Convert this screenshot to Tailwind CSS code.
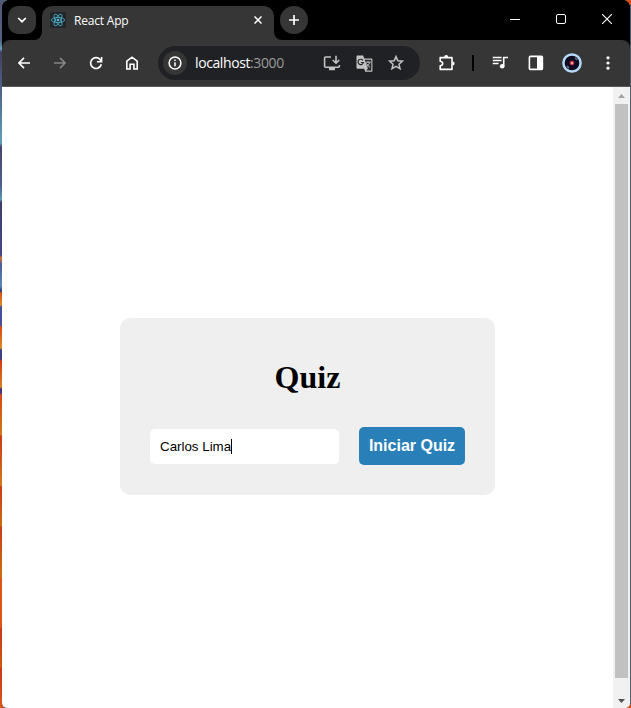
<!DOCTYPE html>
<html lang="pt-BR">
<head>
<meta charset="utf-8">
<title>React App</title>
<script src="https://cdn.jsdelivr.net/npm/@tailwindcss/browser@4"></script>
</head>
<body class="h-[708px] w-[631px] overflow-hidden bg-[radial-gradient(circle_at_631px_0,#d8501a_4px,transparent_6px),radial-gradient(circle_at_631px_708px,#d8501a_3px,transparent_4px),linear-gradient(to_right,transparent_4px,#496478_4px),linear-gradient(to_bottom,#505873_0,#536080_40px,#62a0c0_49px,#443f60_52px,#4d6388_90px,#5f9fba_143px,#48456c_147px,#4e5f91_185px,#5a9bb5_200px,#3c3f6b_202px,#45458a_255px,#e07020_258px,#4f5c9a_264px,#5b87b8_286px,#303a6a_291px,#d8501a_293px,#dc8a20_305px,#44509a_307px,#4a4c9a_325px,#dc4a18_327px,#d88a20_348px,#3d3f80_350px,#3d3f80_359px,#d23c18_361px,#d88020_387px,#44357a_389px,#44357a_393px,#d84a18_395px,#cc7a1c_435px,#c83a1c_436px,#d07a1c_485px,#cc3c1c_487px,#cc6a14_526px,#c83c1c_527px,#cc7014_577px,#d8561a_578px,#d8561a_627px,#c83a1c_629px,#cc5a14_667px,#c8381c_668px,#d8581c_708px)] pr-px pl-0.5 font-['Open_Sans',sans-serif]">
<div class="flex h-full flex-col overflow-hidden rounded-t-[8px] rounded-b-[5px] bg-black">

  <!-- tab strip -->
  <header class="flex h-10 shrink-0 bg-black pl-1.5">
    <button class="mt-1.5 flex size-7 items-center justify-center rounded-[10px] bg-[#363636]">
      <svg width="10" height="8" viewBox="0 0 10 8" fill="none" stroke="#fff" stroke-width="1.7"><path d="M1.2 2 5 5.7 8.8 2"/></svg>
    </button>
    <div class="relative mt-1.5 ml-1.5 flex h-[34px] w-[232px] items-start rounded-t-[10px] bg-[#363636] pl-2">
      <svg class="absolute bottom-0 -left-2" width="8" height="8"><path d="M8 0v8H0a8 8 0 0 0 8-8Z" fill="#363636"/></svg>
      <svg class="absolute -right-2 bottom-0" width="8" height="8"><path d="M0 0v8h8a8 8 0 0 1-8-8Z" fill="#363636"/></svg>
      <svg class="mt-1.5" width="16" height="16" viewBox="0 0 16 16" fill="none" stroke="#4fb4cd" stroke-width=".8"><rect width="16" height="16" rx="2" fill="#22252a" stroke="none"/><ellipse cx="8" cy="8" rx="6.6" ry="2.6"/><ellipse cx="8" cy="8" rx="6.6" ry="2.6" transform="rotate(60 8 8)"/><ellipse cx="8" cy="8" rx="6.6" ry="2.6" transform="rotate(120 8 8)"/><circle cx="8" cy="8" r="1.3" fill="#58c4dc" stroke="none"/></svg>
      <span class="mt-[7px] ml-2 text-[12px] leading-4 tracking-[-0.2px] whitespace-nowrap text-white">React App</span>
      <svg class="mt-2.5 mr-3 ml-auto" width="8" height="8" viewBox="0 0 8 8" stroke="#fff" stroke-width="1.5"><path d="m.5.5 7 7m0-7-7 7"/></svg>
    </div>
    <button class="mt-1.5 ml-1.5 flex size-7 items-center justify-center rounded-full bg-[#363636]">
      <svg width="10" height="10" viewBox="0 0 10 10" stroke="#fff" stroke-width="1.7"><path d="M5 0v10M0 5h10"/></svg>
    </button>
    <div class="ml-auto flex">
      <div class="flex w-[46px] justify-center pt-[19px]"><span class="h-px w-2.5 bg-white"></span></div>
      <div class="flex w-[46px] justify-center pt-3.5"><span class="size-2.5 rounded-[2px] border border-white"></span></div>
      <div class="flex w-[46px] justify-center pt-3.5"><svg width="10" height="10" viewBox="0 0 10 10" stroke="#fff" stroke-width="1.1"><path d="m0 0 10 10M10 0 0 10"/></svg></div>
    </div>
  </header>

  <!-- toolbar -->
  <nav class="flex h-[47px] shrink-0 items-center rounded-t-[8px] border-b border-[#5c5658] bg-[#363636] pl-1">
    <div class="flex w-9 justify-center"><svg width="16" height="16" viewBox="0 0 16 16" fill="none" stroke="#fff" stroke-width="1.6"><path d="M14 8H3M8 2.9 2.9 8 8 13.1"/></svg></div>
    <div class="flex w-9 justify-center"><svg width="16" height="16" viewBox="0 0 16 16" fill="none" stroke="#858585" stroke-width="1.6"><path d="M2 8h11M8 2.9 13.1 8 8 13.1"/></svg></div>
    <div class="flex w-9 justify-center"><svg width="16" height="16" viewBox="0 0 16 16" fill="none" stroke="#fff" stroke-width="1.7"><path d="M13.3 9.2A5.4 5.4 0 1 1 12 4.4l1.3 1.4"/><path d="M13.6 2v4.7H8.9" stroke-width="1.6"/></svg></div>
    <div class="flex w-9 justify-center"><svg width="16" height="16" viewBox="0 0 16 16" fill="none" stroke="#fff" stroke-width="1.6"><path d="M2.8 6.2 8 2.2l5.2 4V14H9.9V9.2H6.1V14H2.8Z"/></svg></div>
    <div class="ml-2 flex h-[34px] w-[262px] items-center rounded-full bg-[#202124] pl-[5px]">
      <span class="flex size-6 items-center justify-center rounded-full bg-[#363636]"><svg width="14" height="14" viewBox="0 0 14 14" fill="none" stroke="#fff" stroke-width="1.5"><circle cx="7" cy="7" r="5.9"/><path d="M7 6.2v4M7 3.6v1.5"/></svg></span>
      <span class="ml-2 text-[14px] leading-5 tracking-[-0.4px] whitespace-nowrap text-white">localhost<span class="text-[#9a9a9a]">:3000</span></span>
      <div class="ml-auto flex pr-2">
        <div class="flex w-8 justify-center"><svg width="18" height="16" viewBox="0 0 18 16" fill="none" stroke="#c3c3c3" stroke-width="1.6"><path d="M8 2H2.6q-1 0-1 1v8.2q0 1 1 1h12.8q1 0 1-1V10M13 .8v7M9.8 5 13 8.2 16.2 5"/><path d="M6 14h6" stroke-width="2.4"/></svg></div>
        <div class="flex w-8 justify-center"><svg width="17" height="17" viewBox="0 0 17 17"><path d="M1.2.5h6l1 3h7.2q1 0 1 1v11.4q0 .8-.9.8H9.2l-1-3H1.5q-1 0-1-1V1.3q0-.8.7-.8Z" fill="#c3c3c3"/><path d="M8.7 4.7h6.1q.5 0 .5.5v9.7q0 .5-.5.5h-4.6l1.7-2Z" fill="#292a2d"/><path d="M6.9 5.3A2.7 2.7 0 1 0 7.4 7.5H4.9" fill="none" stroke="#292a2d" stroke-width="1.2"/><path d="M9.7 7.2h5M12.1 6v1.2M13.8 7.3q-.8 2.8-3.5 4.5M10.6 8.5q1 2.1 3.5 4" fill="none" stroke="#c3c3c3"/></svg></div>
        <div class="flex w-8 justify-center"><svg width="16" height="16" viewBox="0 0 16 16" fill="none" stroke="#c3c3c3" stroke-width="1.5"><path d="m8 1.6 1.85 4.2 4.6.4-3.5 3 1.05 4.5L8 11.3l-4 2.4 1.05-4.5-3.5-3 4.6-.4Z"/></svg></div>
      </div>
    </div>
    <div class="ml-[9px] flex w-9 justify-center"><svg width="18" height="18" viewBox="0 0 18 18" fill="none" stroke="#fff" stroke-width="1.6"><path d="M2.2 3.6H14v11.8H2.2v-3.6q2.5-.4 2.5-2.3T2.2 7.2Z" stroke-linejoin="round"/><path d="M6.2 3a2 2 0 0 1 4 0ZM14.6 7.4a2 2 0 0 1 0 4Z" fill="#fff" stroke="none"/></svg></div>
    <div class="w-[17px] pl-[7px]"><div class="h-4 w-0.5 bg-black"></div></div>
    <div class="flex w-9 justify-center"><svg width="16" height="14" viewBox="0 0 16 14" fill="none" stroke="#fff" stroke-width="1.6"><path d="M.8 1.5h8.8M.8 4.5h8.8M.8 7.5h5.8M11.7 10.2V1.5H16"/><circle cx="10.2" cy="10.2" r="2.3" fill="#fff" stroke="none"/></svg></div>
    <div class="flex w-9 justify-center"><svg width="16" height="16" viewBox="0 0 16 16"><rect x="1.4" y="1.4" width="13" height="13" rx="1" fill="none" stroke="#fff" stroke-width="1.6"/><path d="M9 1h5.5v14H9Z" fill="#fff"/></svg></div>
    <div class="flex w-9 justify-center"><svg width="20" height="20" viewBox="0 0 20 20"><circle cx="10" cy="10" r="8.6" fill="#0c0a1c" stroke="#b5daf7" stroke-width="2.5"/><path d="M13 5q1.7.8 2 2.2M5 12.8q.7 1.7 2.2 2.2" stroke="#68737f" stroke-width="1.6" fill="none"/><circle cx="10" cy="10" r="2.8" fill="#4a1246"/><circle cx="10" cy="10" r="1.9" fill="#ee4757"/><circle cx="10" cy="10" r="1" fill="#ffc27a"/></svg></div>
    <div class="flex w-9 justify-center"><svg width="4" height="16" viewBox="0 0 4 16" fill="#fff"><circle cx="2" cy="2.8" r="1.6"/><circle cx="2" cy="8" r="1.6"/><circle cx="2" cy="13.2" r="1.6"/></svg></div>
  </nav>

  <!-- page -->
  <div class="flex min-h-0 flex-1 bg-white">
    <main class="flex flex-1 justify-center pt-[231px]">
      <section class="h-[177px] w-[375px] rounded-[10px] bg-[#efefef] px-[30px] pt-[41px]">
        <h1 class="text-center font-['Liberation_Serif',serif] text-[32px] leading-[37px] font-bold text-black">Quiz</h1>
        <div class="mt-[31px] flex items-center gap-5">
          <div class="flex h-[35px] w-[189px] items-center rounded-[5px] bg-white pl-2.5 font-['Liberation_Sans',sans-serif] text-[13.333px] leading-[15px] text-black"><span>Carlos Lima</span><span class="h-[15px] w-px bg-black"></span></div>
          <button class="h-[38px] w-[106px] rounded-[5px] bg-[#2980b9] font-['Liberation_Sans',sans-serif] text-[16px] leading-[18px] font-bold whitespace-nowrap text-white">Iniciar Quiz</button>
        </div>
      </section>
    </main>
    <aside class="flex w-[17px] flex-col items-center bg-[#f1f1f1]">
      <svg class="shrink-0" width="17" height="17"><path d="M5 11h7L8.5 7Z" fill="#a3a3a3"/></svg>
      <div class="h-[574px] w-[13px] shrink-0 bg-[#c1c1c1]"></div>
      <svg class="mt-auto mb-px shrink-0" width="17" height="13"><path d="M5 5h7L8.5 9Z" fill="#505050"/></svg>
    </aside>
  </div>
</div>
</body>
</html>
